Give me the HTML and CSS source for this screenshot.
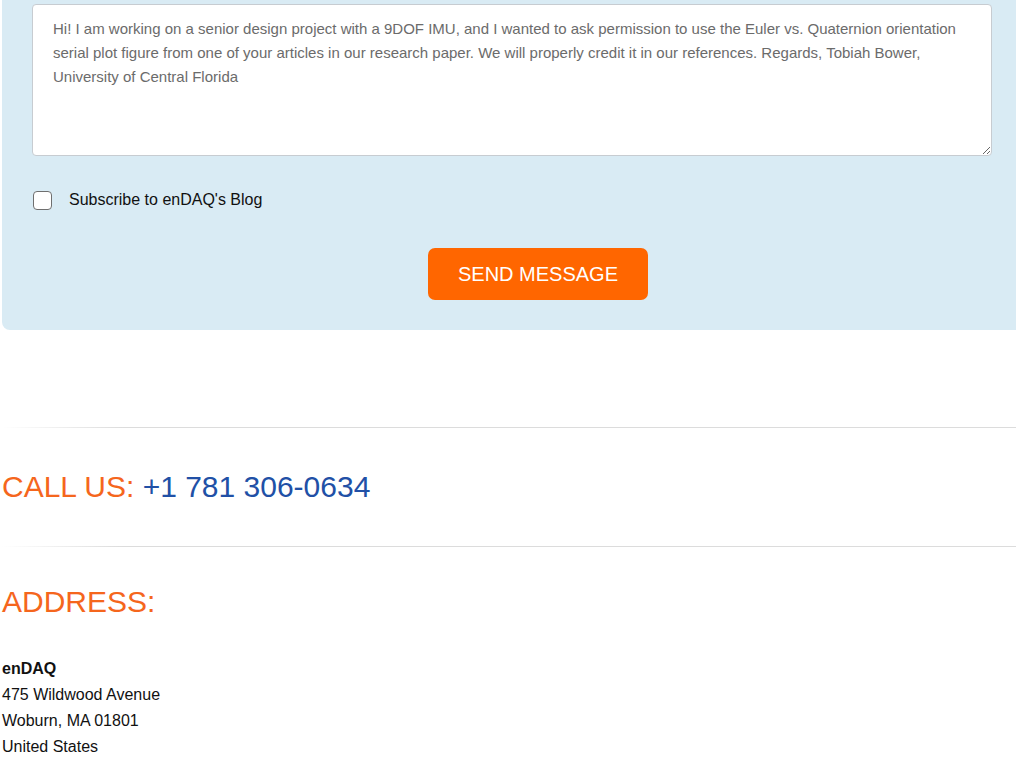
FILE: index.html
```html
<!DOCTYPE html>
<html lang="en">
<head>
<meta charset="utf-8">
<title>Contact enDAQ</title>
<link rel="stylesheet" href="styles.css">
</head>
<body>
<div class="page">
  <form class="panel">
    <textarea class="message">Hi! I am working on a senior design project with a 9DOF IMU, and I wanted to ask permission to use the Euler vs. Quaternion orientation serial plot figure from one of your articles in our research paper. We will properly credit it in our references. Regards, Tobiah Bower, University of Central Florida</textarea>
    <label class="check-row">
      <input type="checkbox" class="check">
      <span>Subscribe to enDAQ's Blog</span>
    </label>
    <div class="actions">
      <button type="button" class="send">SEND MESSAGE</button>
    </div>
  </form>

  <hr class="rule first">
  <h2 class="heading call">CALL US: <a class="phone" href="#">+1 781 306-0634</a></h2>
  <hr class="rule">
  <h2 class="heading addr-title">ADDRESS:</h2>
  <address class="addr">
    <strong>enDAQ</strong><br>
    475 Wildwood Avenue<br>
    Woburn, MA 01801<br>
    United States
  </address>
</div>
</body>
</html>
```

FILE: styles.css
```css
html, body {
  margin: 0;
  padding: 0;
  overflow: hidden;
  background: #fff;
}
body {
  font-family: "Liberation Sans", Arial, sans-serif;
  color: #111;
}
.page {
  padding-left: 2px;
}
.panel {
  background: #d9ebf4;
  border-radius: 0 0 0 8px;
  padding: 4px 0 30px 30px;
  display: flex;
  flex-direction: column;
}
.message {
  box-sizing: border-box;
  width: 960px;
  height: 152px;
  margin: 0;
  padding: 12px 20px 10px;
  border: 1px solid #c7ccd1;
  border-radius: 4px;
  background: #fff;
  font-family: "Liberation Sans", Arial, sans-serif;
  font-size: 15px;
  line-height: 24px;
  color: #6b6b6b;
  resize: vertical;
  outline: none;
}
.check-row {
  display: flex;
  align-items: center;
  gap: 17px;
  margin-top: 34px;
  padding-left: 1px;
  font-size: 16px;
  line-height: 20px;
  color: #111;
}
.check {
  appearance: none;
  -webkit-appearance: none;
  margin: 0;
  width: 19px;
  height: 19px;
  box-sizing: border-box;
  border: 1.5px solid #6f6f6f;
  border-radius: 4px;
  background: #fff;
}
.actions {
  display: flex;
  justify-content: center;
  margin-top: 38px;
  padding-left: 28px;
}
.send {
  width: 220px;
  height: 52px;
  border: none;
  border-radius: 7px;
  background: #ff6600;
  color: #fff;
  font-family: "Liberation Sans", Arial, sans-serif;
  font-size: 20px;
  padding: 0;
  cursor: pointer;
}
.rule {
  border: none;
  height: 1px;
  margin: 0;
  background: linear-gradient(to right, rgba(221,221,221,0) 0%, #dcdcdc 12%, #dcdcdc 100%);
}
.rule.first {
  margin-top: 97px;
}
.heading {
  font-size: 30px;
  line-height: 36px;
  font-weight: normal;
  color: #f5661d;
}
.heading.call {
  margin: 41px 0 41px 0;
}
.heading.addr-title {
  margin: 37px 0 0 0;
}
.phone {
  color: #2150a6;
  text-decoration: none;
}
.addr {
  font-style: normal;
  font-size: 16px;
  line-height: 26px;
  color: #111;
  margin-top: 36px;
}
.addr strong {
  font-weight: bold;
}
```
